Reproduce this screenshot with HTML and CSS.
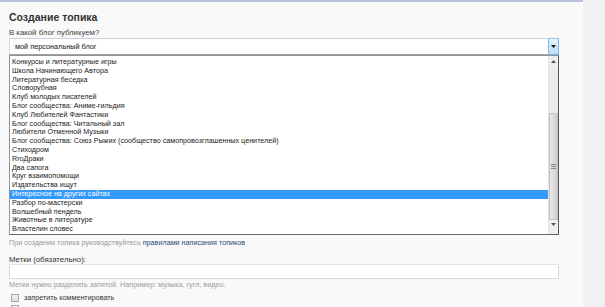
FILE: index.html
```html
<!DOCTYPE html>
<html lang="ru">
<head>
<meta charset="utf-8">
<title>Создание топика</title>
<link rel="stylesheet" href="styles.css">
</head>
<body>
<div class="page">
  <main class="main">
    <h1 class="title">Создание топика</h1>
    <div class="label">В какой блог публикуем?</div>
    <div class="select">
      <span class="select-text">мой персональный блог</span>
      <span class="select-btn"><svg width="5" height="3" viewBox="0 0 5 3"><path d="M0 0H5L2.5 3Z" fill="#111"/></svg></span>
    </div>
    <div class="listbox">
      <div class="items">
        <div class="item">Конкурсы и литературные игры</div>
        <div class="item">Школа Начинающего Автора</div>
        <div class="item">Литературная беседка</div>
        <div class="item">Словорубная</div>
        <div class="item">Клуб молодых писателей</div>
        <div class="item">Блог сообщества: Аниме-гильдия</div>
        <div class="item">Клуб Любителей Фантастики</div>
        <div class="item">Блог сообщества: Читальный зал</div>
        <div class="item">Любители Отменной Музыки</div>
        <div class="item">Блог сообщества: Союз Рыжих (сообщество самопровозглашенных ценителей)</div>
        <div class="item">Стиходром</div>
        <div class="item">RroДраки</div>
        <div class="item">Два сапога</div>
        <div class="item">Круг взаимопомощи</div>
        <div class="item">Издательства ищут</div>
        <div class="item selected">Интересное на других сайтах</div>
        <div class="item">Разбор по-мастерски</div>
        <div class="item">Волшебный пендель</div>
        <div class="item">Животные в литературе</div>
        <div class="item">Властелин словес</div>
      </div>
      <div class="scrollbar">
        <div class="sb-btn"><svg width="5" height="3" viewBox="0 0 5 3"><path d="M0 3H5L2.5 0Z" fill="#555"/></svg></div>
        <div class="sb-track"></div>
        <div class="sb-thumb"><span class="grip"></span></div>
        <div class="sb-btn"><svg width="5" height="3" viewBox="0 0 5 3"><path d="M0 0H5L2.5 3Z" fill="#555"/></svg></div>
      </div>
    </div>
    <div class="hint">При создании топика руководствуйтесь <a class="link" href="#">правилами написания топиков</a></div>
    <div class="label tags-label">Метки (обязательно):</div>
    <div class="input"></div>
    <div class="hint">Метки нужно разделять запятой. Например: музыка, гугл, видео.</div>
    <label class="check"><span class="box"></span>запретить комментировать</label>
    <label class="check"><span class="box"></span>&nbsp;</label>
  </main>
  <aside class="side"></aside>
</div>
</body>
</html>
```

FILE: styles.css
```css
html, body {
  margin: 0;
  padding: 0;
  height: 100%;
  overflow: hidden;
}
body {
  font-family: "Liberation Sans", Arial, sans-serif;
  color: #333;
  background: #f2f2f2;
}
.page {
  display: flex;
  height: 307px;
}
.main {
  width: 574px;
  padding: 8px 0 0 9px;
  border-top: 2px solid #b9c4da;
  background: #f9f9f9;
}
.side {
  flex: 1;
  background: #f2f2f2;
}
.title {
  margin: 0;
  padding-top: 1px;
  font-size: 10.5px;
  line-height: 13px;
  font-weight: bold;
  color: #333;
}
.label {
  margin-top: 4px;
  font-size: 7.8px;
  line-height: 10px;
  color: #444;
}
.select {
  width: 549px;
  height: 15px;
  box-sizing: content-box;
  border-top: 1px solid #c9d3e0;
  border-left: 1px solid #d6dbe3;
  border-bottom: 1px solid #a0a0a0;
  background: #fff;
  display: flex;
  align-items: center;
  justify-content: space-between;
}
.select-text {
  padding-left: 5px;
  font-size: 7.3px;
  color: #111;
}
.select-btn {
  width: 9px;
  height: 15px;
  border: 1px solid #7eb4dc;
  border-top-color: #9cc6e6;
  background: linear-gradient(#e3f3fd, #bde0f7);
  display: flex;
  align-items: center;
  justify-content: center;
  margin-top: -1px;
  margin-bottom: -1px;
}
.listbox {
  width: 548px;
  height: 178px;
  border: 1px solid #8f939a;
  border-right-color: #555;
  border-bottom-color: #666;
  background: #fff;
  display: flex;
}
.items {
  flex: 1;
  padding: 2px 0 0;
}
.item {
  height: 8.8px;
  line-height: 8.8px;
  font-size: 7.2px;
  color: #222;
  padding-left: 2px;
  white-space: nowrap;
}
.item.selected {
  background: #3399ff;
  color: #fff;
}
.scrollbar {
  width: 9px;
  padding: 1px 0;
  display: flex;
  flex-direction: column;
  background: #ededed;
  border-left: 1px solid #e2e2e2;
}
.sb-btn {
  height: 9px;
  display: flex;
  align-items: center;
  justify-content: center;
  background: #f0f0f0;
}
.sb-track {
  height: 47px;
  background: #ececec;
}
.sb-thumb {
  height: 107px;
  box-sizing: border-box;
  border: 1px solid #c2c2c2;
  background: linear-gradient(90deg, #e6e6e6, #dcdcdc 50%, #cfcfcf);
  display: flex;
  align-items: center;
  justify-content: center;
}
.grip {
  width: 5px;
  height: 5px;
  background: repeating-linear-gradient(#888 0 1px, transparent 1px 2px);
}
.hint {
  margin-top: 3px;
  font-size: 7.2px;
  line-height: 10px;
  color: #999;
}
.link {
  color: #2b4a7a;
  text-decoration: none;
}
.tags-label {
  margin-top: 7px;
  line-height: 9px;
  color: #333;
}
.input {
  width: 548px;
  height: 13px;
  border: 1px solid #d8dcdf;
  border-top-color: #dfe6ee;
  background: #fff;
}
.input + .hint {
  margin-top: 1px;
}
.check {
  display: flex;
  align-items: center;
  gap: 5px;
  margin-top: 3px;
  padding-left: 2px;
  font-size: 7.2px;
  line-height: 10px;
  color: #333;
}
.check + .check {
  margin-top: 1px;
}
.box {
  width: 6px;
  height: 6px;
  border: 1px solid #a8a8a8;
  background: linear-gradient(#f4f4f4, #dedede);
}
```
